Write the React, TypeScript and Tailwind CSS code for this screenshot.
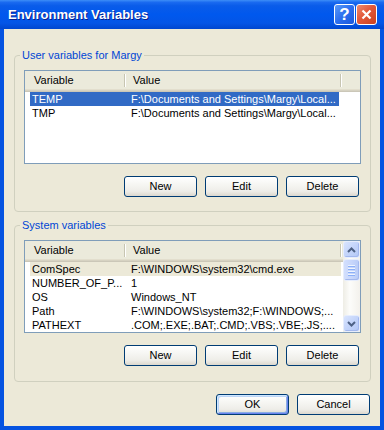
import React from "react";

const BTN =
  "w-[73px] h-[21px] rounded-[3px] border border-[#003C74] bg-[linear-gradient(to_bottom,#FFFFFF_0%,#F7F7F4_35%,#EEEDE8_75%,#DCD8CE_100%)] text-[11px] leading-[13px] text-black flex items-center justify-center";

function XPButton({ label, def }: { label: string; def?: boolean }) {
  return (
    <button
      className={
        def
          ? BTN +
            " shadow-[inset_1px_1px_0_#CEE7FF,inset_-1px_-1px_0_#6982EE,inset_2px_2px_0_#BCD4F6,inset_-2px_-2px_0_#89ADE4]"
          : BTN
      }
    >
      {label}
    </button>
  );
}

function Sep() {
  return (
    <div className="flex h-[13px] shrink-0">
      <div className="w-[1px] bg-[#C7C5B2]" />
      <div className="w-[1px] bg-white" />
    </div>
  );
}

type Row = { name: string; value: string; sel?: "focus" | "gray" };

function Header() {
  return (
    <div className="h-[21px] flex flex-col bg-[#EBEADB] shrink-0">
      <div className="flex-1 flex items-center">
        <div className="w-[99px] pl-[9px] shrink-0">Variable</div>
        <Sep />
        <div className="w-[214px] pl-[7px] shrink-0">Value</div>
        <Sep />
      </div>
      <div className="h-[1px] bg-[#E2DECD]" />
      <div className="h-[1px] bg-[#D6D2C2]" />
      <div className="h-[1px] bg-[#CBC7B8]" />
    </div>
  );
}

function Rows({ rows, w }: { rows: Row[]; w: string }) {
  return (
    <div className="flex flex-col">
      {rows.map((r) => (
        <div
          key={r.name}
          className={
            "h-[14px] flex items-center ml-[5px] " +
            w +
            (r.sel === "focus"
              ? " bg-[#316AC5] text-white"
              : r.sel === "gray"
              ? " bg-[#ECE9D8]"
              : "")
          }
        >
          <div className="w-[100px] pl-[2px] whitespace-nowrap overflow-hidden shrink-0">
            {r.name}
          </div>
          <div className="pl-[1px] whitespace-nowrap overflow-hidden flex-1">
            {r.value}
          </div>
        </div>
      ))}
    </div>
  );
}

function ScrollBtn({ up }: { up?: boolean }) {
  return (
    <div className="h-[17px] w-[17px] rounded-[3px] border border-[#E6EDFD] bg-[linear-gradient(135deg,#D9E4FE_0%,#C3D4FA_50%,#B4C8F6_100%)] shadow-[inset_-1px_-1px_0_#A3B8EE] flex items-center justify-center shrink-0">
      <svg width="9" height="6" viewBox="0 0 9 6">
        <path
          d={up ? "M1 5 L4.5 1.5 L8 5" : "M1 1 L4.5 4.5 L8 1"}
          fill="none"
          stroke="#4D6185"
          strokeWidth="2"
        />
      </svg>
    </div>
  );
}

function Scrollbar() {
  return (
    <div className="w-[17px] shrink-0 flex flex-col bg-[linear-gradient(to_right,#EEEDE5_0%,#FCFCFA_40%,#F3F1EC_100%)]">
      <ScrollBtn up />
      <div className="mt-[1px] h-[22px] w-[17px] rounded-[3px] border border-[#E6EDFD] bg-[linear-gradient(to_right,#D3DFFD_0%,#C7D6FB_50%,#B8CBF7_100%)] shadow-[inset_-1px_-1px_0_#A3B8EE] flex flex-col items-center justify-center gap-[1px]">
        {[0, 1, 2, 3].map((i) => (
          <div key={i} className="w-[7px] flex flex-col">
            <div className="h-[1px] bg-[#EEF4FE]" />
            <div className="h-[1px] bg-[#8CB0F8]" />
          </div>
        ))}
      </div>
      <div className="flex-1" />
      <ScrollBtn />
    </div>
  );
}

export default function App() {
  const userRows: Row[] = [
    { name: "TEMP", value: "F:\\Documents and Settings\\Margy\\Local...", sel: "focus" },
    { name: "TMP", value: "F:\\Documents and Settings\\Margy\\Local..." },
  ];
  const sysRows: Row[] = [
    { name: "ComSpec", value: "F:\\WINDOWS\\system32\\cmd.exe", sel: "gray" },
    { name: "NUMBER_OF_P...", value: "1" },
    { name: "OS", value: "Windows_NT" },
    { name: "Path", value: "F:\\WINDOWS\\system32;F:\\WINDOWS;..." },
    { name: "PATHEXT", value: ".COM;.EXE;.BAT;.CMD;.VBS;.VBE;.JS;...." },
  ];

  return (
    <div className="w-[384px] h-[430px] bg-[#0553E1] flex flex-col font-['Liberation_Sans',Arial,sans-serif] text-[11px] leading-[13px] text-black">
      {/* Title bar */}
      <div className="h-[29px] shrink-0 flex items-center pl-[8px] pr-[7px] bg-[linear-gradient(to_bottom,#3D8EF7_0%,#1A6AF0_8%,#0A5CE9_20%,#0058EE_50%,#0455E6_80%,#0046CF_100%)]">
        <div className="flex-1 text-white font-bold text-[13px] leading-[16px] [text-shadow:1px_1px_0_#0A1E8C]">
          Environment Variables
        </div>
        <div className="flex gap-[1px]">
          <div className="w-[21px] h-[21px] rounded-[3px] border border-white bg-[linear-gradient(135deg,#5A9AF8_0%,#2C6EEE_50%,#1A58DC_100%)] flex items-center justify-center text-white font-bold text-[17px] leading-[17px]">
            ?
          </div>
          <div className="w-[21px] h-[21px] rounded-[3px] border border-white bg-[linear-gradient(135deg,#EE8C6E_0%,#E2583A_45%,#C9401E_100%)] flex items-center justify-center">
            <svg width="11" height="11" viewBox="0 0 11 11">
              <path d="M1.5 1.5 L9.5 9.5 M9.5 1.5 L1.5 9.5" stroke="white" strokeWidth="2.2" />
            </svg>
          </div>
        </div>
      </div>

      {/* Body */}
      <div className="flex-1 ml-[4px] mr-[4px] mb-[4px] bg-[#ECE9D8] flex flex-col pl-[10px] pr-[9px]">
        <fieldset className="mt-[20px] border border-[#D0D0BF] rounded-[4px]">
          <legend className="ml-[5px] px-[2px] text-[#0046D5] leading-[13px]">
            User variables for Margy
          </legend>
          <div className="pt-[8px] px-[9px] pb-[14px] flex flex-col">
            <div className="h-[94px] border border-[#7F9DB9] bg-white flex flex-col">
              <Header />
              <Rows rows={userRows} w="w-[309px]" />
            </div>
            <div className="mt-[12px] flex justify-end gap-[8px] mr-[2px]">
              <XPButton label="New" />
              <XPButton label="Edit" />
              <XPButton label="Delete" />
            </div>
          </div>
        </fieldset>

        <fieldset className="mt-[7px] border border-[#D0D0BF] rounded-[4px]">
          <legend className="ml-[5px] px-[2px] text-[#0046D5] leading-[13px]">
            System variables
          </legend>
          <div className="pt-[8px] px-[9px] pb-[15px] flex flex-col">
            <div className="h-[93px] border border-[#7F9DB9] bg-white flex">
              <div className="flex-1 min-w-0 flex flex-col">
                <Header />
                <Rows rows={sysRows} w="w-[311px]" />
              </div>
              <Scrollbar />
            </div>
            <div className="mt-[12px] flex justify-end gap-[8px] mr-[2px]">
              <XPButton label="New" />
              <XPButton label="Edit" />
              <XPButton label="Delete" />
            </div>
          </div>
        </fieldset>

        <div className="mt-[12px] flex justify-end gap-[8px] mr-[1px]">
          <XPButton label="OK" def />
          <XPButton label="Cancel" />
        </div>
      </div>
    </div>
  );
}
